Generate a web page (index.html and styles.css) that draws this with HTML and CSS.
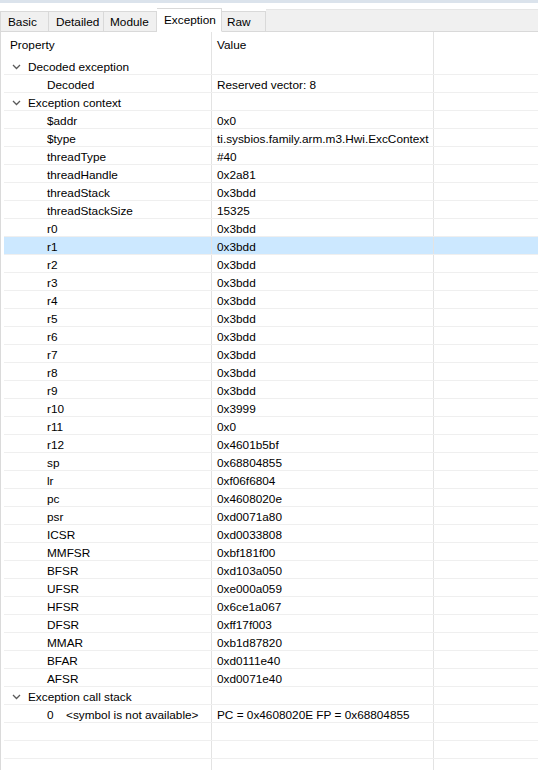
FILE: index.html
```html
<!DOCTYPE html>
<html>
<head>
<meta charset="utf-8">
<link rel="stylesheet" href="styles.css">
</head>
<body>
<div class="topbar"></div>
<div class="tabstrip">
  <div class="tab w-basic">Basic</div>
  <div class="tab w-detailed">Detailed</div>
  <div class="tab w-module">Module</div>
  <div class="tab active w-exception">Exception</div>
  <div class="tab w-raw">Raw</div>
  <div class="tabfill"></div>
</div>
<div class="panel">
  <div class="row header"><div class="c1">Property</div><div class="c2">Value</div><div class="c3"></div></div>
  <div class="row"><div class="c1 group"><svg class="chev" width="9" height="6" viewBox="0 0 9 6"><path d="M1 1 L4.5 4.5 L8 1" fill="none" stroke="#5a5a5a" stroke-width="1.3"/></svg>Decoded exception</div><div class="c2"></div><div class="c3"></div></div>
  <div class="row"><div class="c1 child">Decoded</div><div class="c2">Reserved vector: 8</div><div class="c3"></div></div>
  <div class="row"><div class="c1 group"><svg class="chev" width="9" height="6" viewBox="0 0 9 6"><path d="M1 1 L4.5 4.5 L8 1" fill="none" stroke="#5a5a5a" stroke-width="1.3"/></svg>Exception context</div><div class="c2"></div><div class="c3"></div></div>
  <div class="row"><div class="c1 child">$addr</div><div class="c2">0x0</div><div class="c3"></div></div>
  <div class="row"><div class="c1 child">$type</div><div class="c2">ti.sysbios.family.arm.m3.Hwi.ExcContext</div><div class="c3"></div></div>
  <div class="row"><div class="c1 child">threadType</div><div class="c2">#40</div><div class="c3"></div></div>
  <div class="row"><div class="c1 child">threadHandle</div><div class="c2">0x2a81</div><div class="c3"></div></div>
  <div class="row"><div class="c1 child">threadStack</div><div class="c2">0x3bdd</div><div class="c3"></div></div>
  <div class="row"><div class="c1 child">threadStackSize</div><div class="c2">15325</div><div class="c3"></div></div>
  <div class="row"><div class="c1 child">r0</div><div class="c2">0x3bdd</div><div class="c3"></div></div>
  <div class="row selected"><div class="c1 child">r1</div><div class="c2">0x3bdd</div><div class="c3"></div></div>
  <div class="row"><div class="c1 child">r2</div><div class="c2">0x3bdd</div><div class="c3"></div></div>
  <div class="row"><div class="c1 child">r3</div><div class="c2">0x3bdd</div><div class="c3"></div></div>
  <div class="row"><div class="c1 child">r4</div><div class="c2">0x3bdd</div><div class="c3"></div></div>
  <div class="row"><div class="c1 child">r5</div><div class="c2">0x3bdd</div><div class="c3"></div></div>
  <div class="row"><div class="c1 child">r6</div><div class="c2">0x3bdd</div><div class="c3"></div></div>
  <div class="row"><div class="c1 child">r7</div><div class="c2">0x3bdd</div><div class="c3"></div></div>
  <div class="row"><div class="c1 child">r8</div><div class="c2">0x3bdd</div><div class="c3"></div></div>
  <div class="row"><div class="c1 child">r9</div><div class="c2">0x3bdd</div><div class="c3"></div></div>
  <div class="row"><div class="c1 child">r10</div><div class="c2">0x3999</div><div class="c3"></div></div>
  <div class="row"><div class="c1 child">r11</div><div class="c2">0x0</div><div class="c3"></div></div>
  <div class="row"><div class="c1 child">r12</div><div class="c2">0x4601b5bf</div><div class="c3"></div></div>
  <div class="row"><div class="c1 child">sp</div><div class="c2">0x68804855</div><div class="c3"></div></div>
  <div class="row"><div class="c1 child">lr</div><div class="c2">0xf06f6804</div><div class="c3"></div></div>
  <div class="row"><div class="c1 child">pc</div><div class="c2">0x4608020e</div><div class="c3"></div></div>
  <div class="row"><div class="c1 child">psr</div><div class="c2">0xd0071a80</div><div class="c3"></div></div>
  <div class="row"><div class="c1 child">ICSR</div><div class="c2">0xd0033808</div><div class="c3"></div></div>
  <div class="row"><div class="c1 child">MMFSR</div><div class="c2">0xbf181f00</div><div class="c3"></div></div>
  <div class="row"><div class="c1 child">BFSR</div><div class="c2">0xd103a050</div><div class="c3"></div></div>
  <div class="row"><div class="c1 child">UFSR</div><div class="c2">0xe000a059</div><div class="c3"></div></div>
  <div class="row"><div class="c1 child">HFSR</div><div class="c2">0x6ce1a067</div><div class="c3"></div></div>
  <div class="row"><div class="c1 child">DFSR</div><div class="c2">0xff17f003</div><div class="c3"></div></div>
  <div class="row"><div class="c1 child">MMAR</div><div class="c2">0xb1d87820</div><div class="c3"></div></div>
  <div class="row"><div class="c1 child">BFAR</div><div class="c2">0xd0111e40</div><div class="c3"></div></div>
  <div class="row"><div class="c1 child">AFSR</div><div class="c2">0xd0071e40</div><div class="c3"></div></div>
  <div class="row"><div class="c1 group"><svg class="chev" width="9" height="6" viewBox="0 0 9 6"><path d="M1 1 L4.5 4.5 L8 1" fill="none" stroke="#5a5a5a" stroke-width="1.3"/></svg>Exception call stack</div><div class="c2"></div><div class="c3"></div></div>
  <div class="row"><div class="c1 child"><span class="frame">0</span>&lt;symbol is not available&gt;</div><div class="c2">PC = 0x4608020E FP = 0x68804855</div><div class="c3"></div></div>
  <div class="row"><div class="c1"></div><div class="c2"></div><div class="c3"></div></div>
  <div class="row"><div class="c1"></div><div class="c2"></div><div class="c3"></div></div>
  <div class="row"><div class="c1"></div><div class="c2"></div><div class="c3"></div></div>
</div>
</body>
</html>
```
FILE: styles.css
```css
html, body {
  margin: 0;
  padding: 0;
  background: #ffffff;
  overflow: hidden;
}
body {
  font-family: "Liberation Sans", Arial, sans-serif;
  font-size: 11.8px;
  color: #000000;
  width: 538px;
  height: 770px;
}
.topbar {
  height: 3px;
  background: #dbe3ec;
}
.tabstrip {
  display: flex;
  align-items: flex-end;
  height: 29px;
  box-sizing: border-box;
  border-bottom: 1px solid #d9d9d9;
}
.tab {
  box-sizing: border-box;
  height: 21px;
  margin-bottom: -1px;
  background: #f0f0f0;
  border: 1px solid #d9d9d9;
  border-left: none;
  padding-top: 1px;
  line-height: 18px;
  white-space: nowrap;
}
.w-basic { width: 49px; border-left: 1px solid #d9d9d9; padding-left: 7px; }
.w-detailed { width: 55px; padding-left: 7px; }
.w-module { width: 53px; padding-left: 6px; }
.w-exception { width: 65px; padding-left: 7px; }
.w-raw { width: 44px; padding-left: 5px; }
.tab.active {
  height: 24px;
  background: #ffffff;
  border-bottom: 1px solid #ffffff;
  padding-top: 2px;
  line-height: 18px;
  position: relative;
  z-index: 1;
}
.tabfill {
  flex: 1;
  height: 22px;
  background: #f0f0f0;
  border-top: 1px solid #e6e6e6;
  box-sizing: border-box;
}
.panel {
  border-left: 1px solid #dadada;
  padding-left: 3px;
  height: 738px;
}
.row {
  display: grid;
  grid-template-columns: 208px 222px 1fr;
  height: 18px;
  box-sizing: border-box;
  border-bottom: 1px solid #efefef;
  line-height: 14px;
}
.row.header {
  height: 25px;
  border-bottom: none;
  line-height: 14px;
}
.row.header .c1, .row.header .c2 {
  padding-top: 6px;
}
.row.selected {
  background: #cce8ff;
}
.c1, .c2, .c3 {
  white-space: nowrap;
  overflow: hidden;
  box-sizing: border-box;
  padding-top: 3px;
}
.c1 {
  padding-left: 6px;
  border-right: 1px solid #e3e3e3;
  display: flex;
  align-items: center;
}
.row.header .c1 { align-items: flex-start; }
.c2 {
  padding-left: 5px;
  border-right: 1px solid #e3e3e3;
}
.c1.group {
  padding-left: 8px;
}
.chev {
  margin-right: 7px;
  flex: none;
}
.c1.child {
  padding-left: 43px;
}
.frame {
  display: inline-block;
  width: 19px;
}
```
